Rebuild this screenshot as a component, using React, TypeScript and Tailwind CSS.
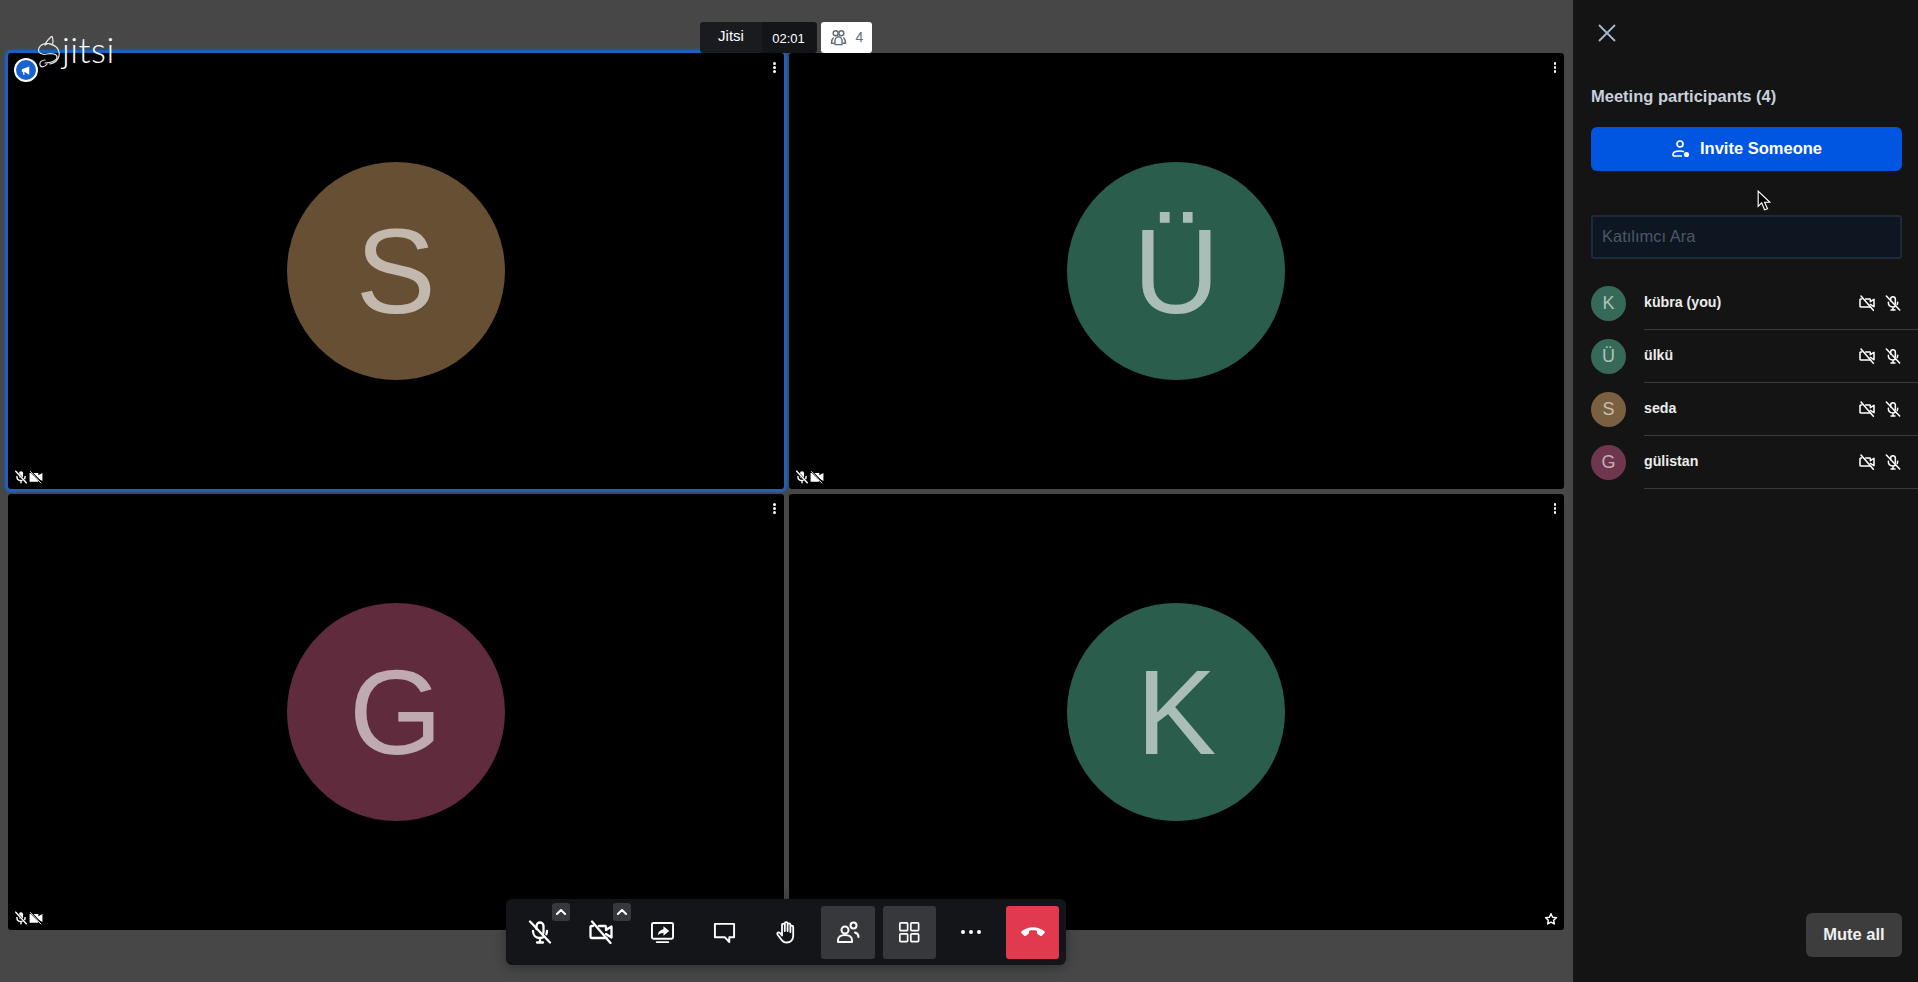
import type { ReactNode } from "react";

type IconProps = { className?: string };

// jitsi toolbar icons, redrawn by hand
function MicOffIcon({ className = "" }: IconProps) {
  return (
    <svg viewBox="0 0 24 24" fill="none" stroke="currentColor" strokeWidth="2.300" strokeLinecap="round" className={className}>
      <path d="M8.500 9V6a3.500 3.500 0 0 1 7 0v6a3.500 3.500 0 0 1-1 2.500" />
      <path d="M5 11c0 4.200 3 7 7 7 1.500 0 3-.4 4.200-1.200M19 11c0 1.200-.3 2.300-.7 3.300M12 18v4M9 22.500h6" />
      <path d="M2 1.500l20 21" />
    </svg>
  );
}

function CamOffIcon({ className = "" }: IconProps) {
  return (
    <svg viewBox="0 0 24 24" fill="none" stroke="currentColor" strokeWidth="2.300" strokeLinecap="round" strokeLinejoin="round" className={className}>
      <path d="M4 6H2.500a1 1 0 0 0-1 1v10a1 1 0 0 0 1 1h15M10 6h6a1 1 0 0 1 1 1v3l5.500-3.500v11L17 14" />
      <path d="M3 1.500l18.500 21.500" />
    </svg>
  );
}

function ShareIcon({ className = "" }: IconProps) {
  return (
    <svg viewBox="0 0 24 24" fill="none" className={className}>
      <rect x="1" y="2" width="22" height="16.500" rx="1.500" stroke="currentColor" strokeWidth="2" />
      <path d="M6 22h12" stroke="currentColor" strokeWidth="2" strokeLinecap="round" />
      <path d="M13 5.500l6 5-6 5v-3c-2.500 0-4.500.7-6 2.600.4-3.500 2.500-6 6-6.400V5.500z" fill="currentColor" />
    </svg>
  );
}

function ChatIcon({ className = "" }: IconProps) {
  return (
    <svg viewBox="0 0 24 24" fill="none" stroke="currentColor" strokeWidth="2" strokeLinejoin="round" className={className}>
      <path d="M2 3h20v14h-5v5l-4.500-5H2V3z" />
    </svg>
  );
}

function HandIcon({ className = "" }: IconProps) {
  return (
    <svg viewBox="0 0 24 24" fill="none" stroke="currentColor" strokeWidth="1.800" strokeLinecap="round" strokeLinejoin="round" className={className}>
      <path d="M8 12V5a1.400 1.400 0 0 1 2.800 0v6V3.500a1.400 1.400 0 0 1 2.800 0V11 4.800a1.400 1.400 0 0 1 2.800 0V12 7a1.400 1.400 0 0 1 2.800 0v9c0 3.500-2.500 6.500-6.500 6.500-3 0-4.500-1.300-6-3.800L3.500 14.500c-.9-1.600 1.300-2.900 2.500-1.500L8 15.500V12z" />
    </svg>
  );
}

function PeopleIcon({ className = "" }: IconProps) {
  return (
    <svg viewBox="0 0 24 24" fill="none" stroke="currentColor" strokeWidth="2" strokeLinecap="round" strokeLinejoin="round" className={className}>
      <circle cx="9" cy="10" r="3.500" />
      <path d="M2 22v-2c0-3 3-5 7-5s7 2 7 5v2H2z" />
      <circle cx="17.500" cy="5.500" r="3" />
      <path d="M19 12.500c2 .6 3.500 2.200 3.500 4.500" />
    </svg>
  );
}

function GridIcon({ className = "" }: IconProps) {
  return (
    <svg viewBox="0 0 24 24" fill="none" stroke="currentColor" strokeWidth="1.800" className={className}>
      <rect x="2" y="2" width="8.500" height="8.500" rx="1" />
      <rect x="14" y="2" width="8.500" height="8.500" rx="1" />
      <rect x="2" y="14" width="8.500" height="8.500" rx="1" />
      <rect x="14" y="14" width="8.500" height="8.500" rx="1" />
    </svg>
  );
}

function HangupIcon({ className = "" }: IconProps) {
  return (
    <svg viewBox="0 0 24 24" fill="currentColor" className={className}>
      <path d="M12 7.500c-4 0-8 1.500-10.800 4-.4.400-.4.900 0 1.300l2.600 2.700c.4.300.9.300 1.300.1l2.700-1.800c.3-.2.500-.5.500-.9v-1.900c1.200-.5 2.400-.6 3.700-.6s2.500.1 3.700.6v1.900c0 .4.200.7.500.9l2.700 1.800c.4.200.9.200 1.300-.1l2.600-2.700c.4-.4.400-.9 0-1.300-2.800-2.500-6.800-4-10.800-4z" />
    </svg>
  );
}

function ChevronUp() {
  return (
    <svg viewBox="0 0 24 24" fill="none" stroke="white" strokeWidth="3.500" strokeLinecap="round" strokeLinejoin="round" className="w-3.5 h-3.5">
      <path d="M5 15.500l7-7 7 7" />
    </svg>
  );
}

function Dots() {
  return (
    <div className="flex flex-col gap-[1.500px]">
      <span className="w-[2.500px] h-[2.500px] rounded-full bg-white" />
      <span className="w-[2.500px] h-[2.500px] rounded-full bg-white" />
      <span className="w-[2.500px] h-[2.500px] rounded-full bg-white" />
    </div>
  );
}

function TileMic() {
  return (
    <svg viewBox="0 0 24 24" className="w-3.5 h-3.5" fill="none" stroke="white" strokeWidth="2.500" strokeLinecap="round">
      <rect x="8.500" y="2" width="7" height="12" rx="3.500" fill="white" stroke="none" />
      <path d="M5 11c0 4.200 3 7 7 7s7-2.800 7-7M12 18v4" />
      <path d="M3 2l18 20" stroke="black" strokeWidth="4" />
      <path d="M3 2l18 20" />
    </svg>
  );
}

function TileCam() {
  return (
    <svg viewBox="0 0 24 24" className="w-3.5 h-3.5" fill="white">
      <path d="M1 5h15v4l7-4v14l-7-4v5H1V5z" />
      <path d="M2 1.500l20 21" stroke="black" strokeWidth="3.500" />
      <path d="M2 2l19 21" stroke="white" strokeWidth="1.500" />
    </svg>
  );
}

function Tile({ letter, color, active, star }: { letter: string; color: string; active?: boolean; star?: boolean }) {
  return (
    <div className={`relative bg-black rounded-[3px] flex items-center justify-center ${active ? "z-10 shadow-[0_0_0_3px_#1f5fbd,0_0_4px_4px_rgba(31,95,189,0.4)]" : ""}`}>
      <div className={`w-[218px] h-[218px] rounded-full flex items-center justify-center ${color}`}>
        <span className="text-[120px] leading-none text-white/60">{letter}</span>
      </div>
      <div className="absolute top-[9px] right-[8px]">
        <Dots />
      </div>
      <div className="absolute bottom-[5px] left-[6px] flex items-center gap-[1px]">
        <TileMic />
        <TileCam />
      </div>
      {star && (
        <svg viewBox="0 0 24 24" className="absolute bottom-[4px] right-[6px] w-3.5 h-3.5" fill="none" stroke="white" strokeWidth="2.500" strokeLinejoin="round">
          <path d="M12 3l2.800 5.900 6.400.8-4.700 4.400 1.200 6.400-5.700-3.100-5.700 3.100 1.200-6.400-4.700-4.400 6.400-.8L12 3z" />
        </svg>
      )}
    </div>
  );
}

function ToolButton({ children, active, danger }: { children: ReactNode; active?: boolean; danger?: boolean }) {
  return (
    <div className={`w-[53.6px] h-[53px] rounded-[3px] flex items-center justify-center text-white ${active ? "bg-[#36383c]" : ""} ${danger ? "bg-[#e1394e]" : ""}`}>
      {children}
    </div>
  );
}

function Row({ letter, name, color }: { letter: string; name: string; color: string }) {
  return (
    <div className="flex h-[53px] pl-[18px]">
      <div className={`w-[35px] h-[35px] mt-[9px] rounded-full flex items-center justify-center text-[18px] text-white/60 shrink-0 ${color}`}>
        {letter}
      </div>
      <div className="flex-1 ml-[18px] border-b border-[#3a3a3a] flex items-start">
        <span className="text-[14.200px] font-bold text-[#ececec] leading-[20px] mt-[15px] flex-1">{name}</span>
        <div className="flex items-center gap-[10px] mt-[18px] mr-[17px] text-white">
          <CamOffIcon className="w-4 h-4" />
          <MicOffIcon className="w-4 h-4" />
        </div>
      </div>
    </div>
  );
}

export default function App() {
  return (
    <div className="flex w-[1918px] h-[982px] overflow-hidden bg-[#474747] font-['Liberation_Sans',sans-serif]">
      {/* Stage */}
      <div className="relative flex-1 pl-[8px] pr-[9px] pt-[53px] pb-[52px]">
        <div className="grid grid-cols-2 grid-rows-2 gap-[5px] h-full">
          <Tile letter="S" color="bg-[#664f33]" active />
          <Tile letter="Ü" color="bg-[#2b5d4d]" />
          <Tile letter="G" color="bg-[#5f2b3d]" />
          <Tile letter="K" color="bg-[#2b5d4d]" star />
        </div>

        {/* Logo */}
        <div className="absolute z-20 left-[37px] top-[26px] flex items-start">
          <svg viewBox="0 0 24 32" className="w-[24px] h-[32px] mt-[10px]" fill="none" stroke="#e8e8e8" strokeWidth="1.200" strokeLinecap="round" strokeLinejoin="round">
            <path d="M15 0c1 3 2 6 0 9-2-2-5-2-7 0 1-4 4-6 7-9z" />
            <path d="M18 10C13 6 4 7 2 12c-2 5 3 7 8 6 5-1 10 0 10 3 0 4-7 6-12 6" />
            <path d="M16 9c5 2 7 7 6 11-1 4-5 7-9 8" />
            <path d="M8 24c-3 0-6 2-5 5 1 3 5 2 7-1" />
          </svg>
          <span className="font-['Lato',sans-serif] font-light text-[35px] leading-[50px] text-white ml-[1px] -mt-[2px] tracking-[0.5px]">jitsi</span>
        </div>

        {/* Subject */}
        <div className="absolute z-20 top-[22px] left-[700px] flex items-stretch gap-[4px] h-[31px]">
          <div className="flex rounded-[3px] overflow-hidden text-white">
            <div className="w-[62px] bg-[#1a1b1e] flex items-center justify-center text-[15px] pb-[3px]">Jitsi</div>
            <div className="w-[55px] bg-[#131519] flex items-center justify-center text-[13px] pt-[2px] pr-[2px]">02:01</div>
          </div>
          <div className="w-[51px] bg-white rounded-[3px] flex items-center justify-center gap-[9px] text-[#5e6d7a] text-[14px]">
            <svg viewBox="0 0 24 24" className="w-[17px] h-[17px]" fill="none" stroke="currentColor" strokeWidth="2" strokeLinejoin="round">
              <circle cx="8" cy="6" r="3.500" />
              <circle cx="16" cy="6" r="3.500" />
              <path d="M5 12c-2 2-3 5-3 8h4M19 12c2 2 3 5 3 8h-4" />
              <path d="M12 11c-3 0-5 3-5 6v5h10v-5c0-3-2-6-5-6z" />
            </svg>
            4
          </div>
        </div>

        {/* Toolbar */}
        <div className="absolute z-20 left-[506px] top-[899px] h-[66px] px-[7px] flex items-center gap-[8px] bg-[#131519] rounded-[6px] shadow-[0_2px_12px_rgba(0,0,0,0.35)]">
          <ToolButton><MicOffIcon className="w-[24px] h-[24px]" /></ToolButton>
          <ToolButton><CamOffIcon className="w-[24px] h-[24px]" /></ToolButton>
          <ToolButton><ShareIcon className="w-[23px] h-[23px]" /></ToolButton>
          <ToolButton><ChatIcon className="w-[23px] h-[23px]" /></ToolButton>
          <ToolButton><HandIcon className="w-[24px] h-[24px]" /></ToolButton>
          <ToolButton active><PeopleIcon className="w-[24px] h-[24px]" /></ToolButton>
          <ToolButton active><GridIcon className="w-[22px] h-[22px]" /></ToolButton>
          <ToolButton>
            <div className="flex gap-[4px]">
              <span className="w-1 h-1 rounded-full bg-white" />
              <span className="w-1 h-1 rounded-full bg-white" />
              <span className="w-1 h-1 rounded-full bg-white" />
            </div>
          </ToolButton>
          <ToolButton danger><HangupIcon className="w-[26px] h-[26px]" /></ToolButton>
          <div className="absolute left-[46px] top-[4px] w-[18px] h-[18px] rounded-[3px] bg-[#36383c] flex items-center justify-center"><ChevronUp /></div>
          <div className="absolute left-[107px] top-[4px] w-[18px] h-[18px] rounded-[3px] bg-[#36383c] flex items-center justify-center"><ChevronUp /></div>
        </div>

        {/* Dominant speaker badge */}
        <div className="absolute z-30 left-[14px] top-[58px] w-[24px] h-[24px] rounded-full bg-[#1a62d0] border-2 border-white flex items-center justify-center">
          <svg viewBox="0 0 24 24" className="w-[11px] h-[11px]" fill="white">
            <path d="M2 9l16-6v18L8 15H7l1 6H5l-1-6H2V9z" />
          </svg>
        </div>
      </div>

      {/* Participants panel */}
      <div className="relative w-[345px] h-full bg-[#141414] flex flex-col">
        <div className="pl-[25px] pt-[24px] h-[80px]">
          <svg viewBox="0 0 18 18" className="w-[18px] h-[18px]" fill="none" stroke="#a4b8d1" strokeWidth="1.800">
            <path d="M1 1l16 16M17 1L1 17" />
          </svg>
        </div>
        <div className="px-[18px] text-[16.500px] font-bold text-[#c8d0dc] leading-[20px] mt-[6px]">Meeting participants (4)</div>
        <div className="ml-[18px] mr-[16px] mt-[21px] h-[44px] pb-[2px] rounded-[6px] bg-[#0056e0] flex items-center justify-center gap-[9px] text-white font-bold text-[16.500px]">
          <svg viewBox="0 0 20 20" className="w-[20px] h-[20px] mt-[2px]" fill="none" stroke="white" strokeWidth="1.700">
            <circle cx="9" cy="5" r="3" />
            <path d="M2 17v-1.500C2 13 5 12 9 12c2 0 3 .2 4 .7M2 17h9" />
            <circle cx="15.500" cy="15.500" r="2.600" fill="white" stroke="none" />
          </svg>
          Invite Someone
        </div>
        <input
          readOnly
          placeholder="Katılımcı Ara"
          className="ml-[18px] mr-[16px] mt-[44px] h-[44px] pb-[2px] rounded-[3px] bg-[#0e1621] border-2 border-[#1c2a3c] px-[9px] text-[16.500px] placeholder:text-[#4b5668] outline-none"
        />
        <div className="mt-[18px] flex flex-col">
          <Row letter="K" name="kübra (you)" color="bg-[#376958]" />
          <Row letter="Ü" name="ülkü" color="bg-[#376958]" />
          <Row letter="S" name="seda" color="bg-[#7a6040]" />
          <Row letter="G" name="gülistan" color="bg-[#6f374d]" />
        </div>
        <div className="absolute right-[16px] bottom-[25px] w-[96px] h-[44px] pb-[2px] rounded-[6px] bg-[#3d3d3d] flex items-center justify-center text-[16.500px] font-bold text-[#f0f0f0]">
          Mute all
        </div>
        {/* Mouse pointer */}
        <svg viewBox="0 0 12 18" className="absolute left-[184px] top-[190px] w-[14px] h-[21px]" fill="black" stroke="white" strokeWidth="1">
          <path d="M1 1v13l3-3 2.500 6 2.500-1-2.500-5.500H11L1 1z" />
        </svg>
      </div>
    </div>
  );
}
